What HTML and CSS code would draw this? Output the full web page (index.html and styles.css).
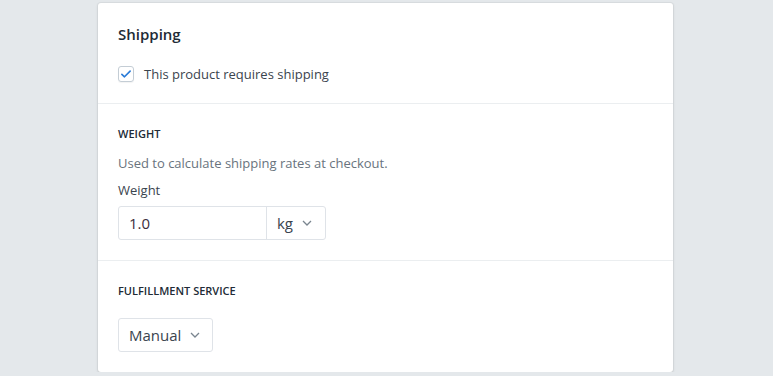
FILE: index.html
```html
<!DOCTYPE html>
<html lang="en">
<head>
    <meta charset="UTF-8">
    <title>Shipping</title>
    <link rel="stylesheet" href="styles.css">
</head>
<body>
    <div class="page">
        <div class="card">
            <div class="section">
                <h2 class="card-title">Shipping</h2>
                <label class="check">
                    <span class="check-box">
                        <svg viewBox="0 0 16 16" width="12" height="12">
                            <path d="M2.5 8.5l3.5 3.2 7.5-7.5" fill="none" stroke="#2a7bd8" stroke-width="2.2" stroke-linecap="round" stroke-linejoin="round"/>
                        </svg>
                    </span>
                    This product requires shipping
                </label>
            </div>
            <div class="section">
                <h3 class="subheading">Weight</h3>
                <p class="help">Used to calculate shipping rates at checkout.</p>
                <div class="field-label">Weight</div>
                <div class="weight-field">
                    <div class="weight-value">1.0</div>
                    <div class="unit">kg
                        <svg class="caret" viewBox="0 0 10 6" width="10" height="6">
                            <path d="M1 1l4 4 4-4" fill="none" stroke="#7a858f" stroke-width="1.3"/>
                        </svg>
                    </div>
                </div>
            </div>
            <div class="section">
                <h3 class="subheading">Fulfillment service</h3>
                <div class="select">Manual
                    <svg class="caret" viewBox="0 0 10 6" width="10" height="6">
                        <path d="M1 1l4 4 4-4" fill="none" stroke="#7a858f" stroke-width="1.3"/>
                    </svg>
                </div>
            </div>
        </div>
    </div>
</body>
</html>
```

FILE: styles.css
```css
body {
    margin: 0;
    background: #e4e8eb;
    font-family: "Open Sans", sans-serif;
    color: #212b36;
}

.page {
    padding: 3px 0 0 98px;
}

.card {
    width: 575px;
    background: #fff;
    border-radius: 3px;
    box-shadow: 0 0 0 1px rgba(63, 63, 68, 0.05), 0 1px 3px 0 rgba(63, 63, 68, 0.15);
}

.section {
    padding: 20px;
    border-top: 1px solid #ebeef0;
}

.section:first-child {
    border-top: none;
}

.card-title {
    margin: 0;
    font-size: 15px;
    font-weight: 600;
    line-height: 22px;
}

.check {
    display: flex;
    align-items: center;
    gap: 10px;
    margin-top: 20px;
    font-size: 13px;
    color: #3a444e;
}

.check-box {
    display: flex;
    align-items: center;
    justify-content: center;
    width: 14px;
    height: 14px;
    border: 1px solid #c4cdd5;
    border-radius: 3px;
    box-shadow: 0 1px 1px rgba(0, 0, 0, 0.05);
}

.subheading {
    margin: 2px 0 0;
    font-size: 11px;
    font-weight: 600;
    line-height: 16px;
    text-transform: uppercase;
}

.help {
    margin: 12px 0 0;
    font-size: 13px;
    color: #69737d;
}

.field-label {
    margin-top: 9px;
    font-size: 13px;
    color: #3a444e;
}

.weight-field {
    display: flex;
    width: 206px;
    height: 32px;
    margin-top: 7px;
    border: 1px solid #dfe3e8;
    border-radius: 3px;
    font-size: 15px;
}

.weight-value {
    flex: 1;
    display: flex;
    align-items: center;
    padding-left: 10px;
    color: #3c2e3c;
}

.unit {
    display: flex;
    align-items: center;
    gap: 9px;
    padding: 0 13px 0 10px;
    border-left: 1px solid #dfe3e8;
    color: #3a444e;
}

.select {
    display: inline-flex;
    align-items: center;
    gap: 9px;
    height: 32px;
    margin-top: 19px;
    padding: 0 12px 0 10px;
    border: 1px solid #dfe3e8;
    border-radius: 3px;
    font-size: 15px;
    color: #3a444e;
}
```
